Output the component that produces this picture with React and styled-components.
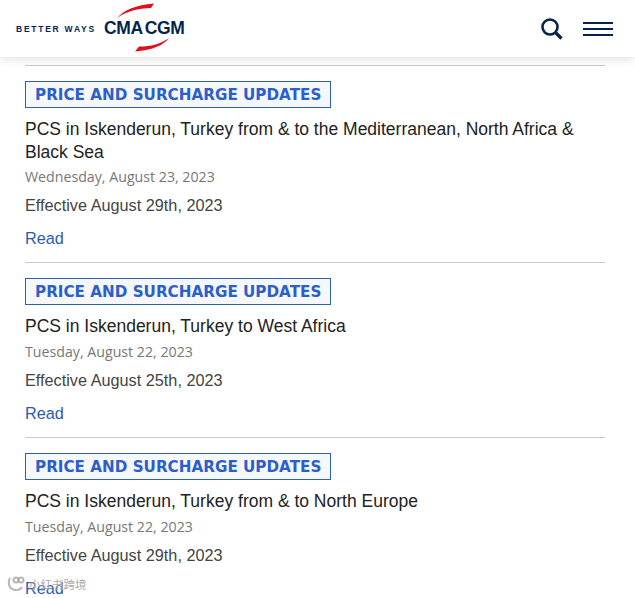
import React from "react";
import styled, { createGlobalStyle } from "styled-components";

const GlobalStyle = createGlobalStyle`
  html, body {
    margin: 0;
    padding: 0;
    background: #fff;
    overflow: hidden;
  }
  body {
    height: 598px;
    font-family: "Liberation Sans", Arial, sans-serif;
  }
`;

const Page = styled.div`
  position: relative;
  width: 635px;
  height: 598px;
  overflow: hidden;
`;

const Header = styled.header`
  height: 57px;
  display: flex;
  align-items: center;
  justify-content: space-between;
  padding: 0 22px 0 16px;
  background: #fff;
  box-shadow: 0 2px 10px rgba(0, 0, 0, 0.12);
`;

const Brand = styled.div`
  display: flex;
  align-items: center;
  gap: 8px;
`;

const Tagline = styled.span`
  font-size: 8.5px;
  font-weight: 700;
  letter-spacing: 1.75px;
  color: #04234f;
  white-space: nowrap;
`;

const LogoMark = styled.div`
  position: relative;
  width: 82px;
  height: 52px;
  display: flex;
  align-items: center;
  svg {
    position: absolute;
    left: 0;
    top: 0;
  }
`;

const LogoText = styled.span`
  display: flex;
  gap: 2px;
  font-size: 17.5px;
  font-weight: 700;
  letter-spacing: -0.35px;
  color: #04234f;
  white-space: nowrap;
`;

const Tools = styled.div`
  display: flex;
  align-items: center;
  gap: 20px;
`;

const Burger = styled.div`
  width: 30px;
  height: 14px;
  display: flex;
  flex-direction: column;
  justify-content: space-between;
  span {
    display: block;
    height: 2px;
    background: #04234f;
  }
`;

const List = styled.main`
  margin: 8px 30px 0 25px;
`;

const Item = styled.article`
  border-top: 1px solid #c8c8c8;
  padding: 15px 0 0;
  height: ${(p) => p.$height}px;
  box-sizing: border-box;
`;

const Tag = styled.div`
  display: inline-block;
  box-sizing: border-box;
  height: 27px;
  line-height: 26px;
  padding: 0 9px;
  border: 1px solid #2d5fb3;
  background: #f6f7fb;
  color: #2b5fc9;
  font-family: "DejaVu Sans", Verdana, sans-serif;
  font-size: 15.2px;
  font-weight: 700;
  white-space: nowrap;
`;

const Title = styled.h3`
  margin: 10px 0 0;
  font-size: 17.5px;
  line-height: 22.5px;
  font-weight: 400;
  color: #222;
`;

const DateLine = styled.div`
  margin-top: 4px;
  font-family: "Open Sans", sans-serif;
  font-size: 14.2px;
  line-height: 20px;
  color: #777;
`;

const Effective = styled.p`
  margin: 8px 0 0;
  font-size: 16.25px;
  line-height: 20px;
  color: #444;
`;

const ReadLink = styled.a`
  display: block;
  margin-top: 13px;
  font-size: 16.25px;
  line-height: 20px;
  color: #2b5cae;
  text-decoration: none;
`;

const Watermark = styled.div`
  position: absolute;
  left: 7px;
  bottom: 5px;
  display: flex;
  align-items: center;
  gap: 4px;
  font-family: "Noto Sans CJK SC", sans-serif;
  font-size: 11.5px;
  line-height: 18px;
  color: rgba(150, 150, 150, 0.85);
  text-shadow: 0 0 2px #fff;
`;

const items = [
  {
    title: "PCS in Iskenderun, Turkey from & to the Mediterranean, North Africa & Black Sea",
    date: "Wednesday, August 23, 2023",
    effective: "Effective August 29th, 2023",
    height: 197,
  },
  {
    title: "PCS in Iskenderun, Turkey to West Africa",
    date: "Tuesday, August 22, 2023",
    effective: "Effective August 25th, 2023",
    height: 175,
  },
  {
    title: "PCS in Iskenderun, Turkey from & to North Europe",
    date: "Tuesday, August 22, 2023",
    effective: "Effective August 29th, 2023",
    height: 175,
  },
];

function Logo() {
  return (
    <LogoMark>
      <svg width="82" height="52" viewBox="0 0 82 52">
        <path d="M13 15 C20 7 32 2 50 0.5 L47 5 C34 5.5 23 8 13 15 Z" fill="#e30d1c" />
        <path d="M65 35 C60 42 49 47 31 48.5 L35 43.5 C47 43.5 57 41 65 35 Z" fill="#e30d1c" />
      </svg>
      <LogoText>
        <span>CMA</span>
        <span>CGM</span>
      </LogoText>
    </LogoMark>
  );
}

function SearchIcon() {
  return (
    <svg width="22" height="22" viewBox="0 0 22 22" fill="none" stroke="#04234f">
      <circle cx="9" cy="9" r="7.5" strokeWidth="2.6" />
      <path d="M14.5 14.5 L20.5 20.5" strokeWidth="3.2" />
    </svg>
  );
}

function WatermarkIcon() {
  return (
    <svg width="18" height="16" viewBox="0 0 18 16" fill="none" stroke="rgba(165,165,165,0.8)" strokeWidth="2">
      <path d="M3 2 C0 8 3 14 9 14 C12 14 14 13 15 11" />
      <circle cx="9" cy="4" r="2.5" />
      <circle cx="14" cy="4" r="2.5" />
    </svg>
  );
}

export default function App() {
  return (
    <Page>
      <GlobalStyle />
      <Header>
        <Brand>
          <Tagline>BETTER WAYS</Tagline>
          <Logo />
        </Brand>
        <Tools>
          <SearchIcon />
          <Burger>
            <span />
            <span />
            <span />
          </Burger>
        </Tools>
      </Header>
      <List>
        {items.map((item) => (
          <Item key={item.title} $height={item.height}>
            <Tag>PRICE AND SURCHARGE UPDATES</Tag>
            <Title>{item.title}</Title>
            <DateLine>{item.date}</DateLine>
            <Effective>{item.effective}</Effective>
            <ReadLink href="#">Read</ReadLink>
          </Item>
        ))}
      </List>
      <Watermark>
        <WatermarkIcon />
        小红书跨境
      </Watermark>
    </Page>
  );
}
